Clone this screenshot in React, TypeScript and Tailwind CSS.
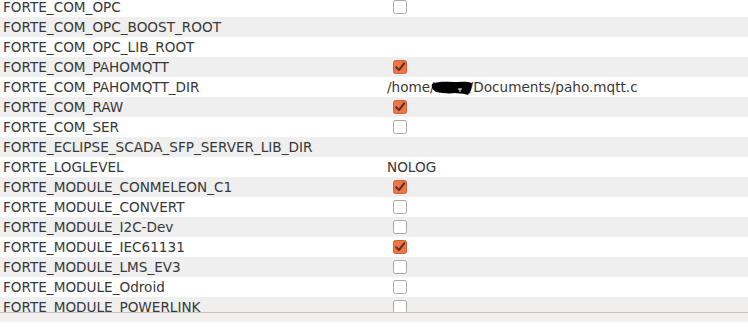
import React from 'react';

type Row = { name: string; value?: string | boolean; path?: boolean };

const ROWS: Row[] = [
  { name: 'FORTE_COM_OPC', value: false },
  { name: 'FORTE_COM_OPC_BOOST_ROOT' },
  { name: 'FORTE_COM_OPC_LIB_ROOT' },
  { name: 'FORTE_COM_PAHOMQTT', value: true },
  { name: 'FORTE_COM_PAHOMQTT_DIR', path: true },
  { name: 'FORTE_COM_RAW', value: true },
  { name: 'FORTE_COM_SER', value: false },
  { name: 'FORTE_ECLIPSE_SCADA_SFP_SERVER_LIB_DIR' },
  { name: 'FORTE_LOGLEVEL', value: 'NOLOG' },
  { name: 'FORTE_MODULE_CONMELEON_C1', value: true },
  { name: 'FORTE_MODULE_CONVERT', value: false },
  { name: 'FORTE_MODULE_I2C-Dev', value: false },
  { name: 'FORTE_MODULE_IEC61131', value: true },
  { name: 'FORTE_MODULE_LMS_EV3', value: false },
  { name: 'FORTE_MODULE_Odroid', value: false },
  { name: 'FORTE_MODULE_POWERLINK', value: false },
];

function CheckBox({ checked }: { checked: boolean }) {
  if (checked) {
    return (
      <svg width="14" height="14" viewBox="0 0 14 14" className="ml-[6px]">
        <rect x="0.5" y="0.5" width="13" height="13" rx="2" fill="#f07446" stroke="#d0602f" />
        <path d="M3.2 7.2 L6 10 L11.2 3.4" fill="none" stroke="#5b3526" strokeWidth="2.1" strokeLinecap="round" strokeLinejoin="round" />
      </svg>
    );
  }
  return (
    <svg width="14" height="14" viewBox="0 0 14 14" className="ml-[6px]">
      <rect x="0.5" y="0.5" width="13" height="13" rx="2" fill="#ffffff" stroke="#a8a6a3" />
    </svg>
  );
}

// black scribble hiding the user name in the path
function Redacted() {
  return (
    <svg width="42" height="16" viewBox="0 0 42 16" className="-mx-[4px] relative top-[1px]">
      <path
        d="M1 4 C8 1 16 2 22 2 C30 2 36 1 41 3 C41 8 39 12 37 15 C32 13 28 14 24 13 C18 14 11 13 5 12 C2 10 0 7 1 4 Z"
        fill="#000000"
      />
      <path d="M27 9 L31 9 M29 9 L29 12" stroke="#ffffff" strokeWidth="1" />
    </svg>
  );
}

function Value({ row }: { row: Row }) {
  if (row.path) {
    return (
      <span className="flex items-center">
        /home/
        <Redacted />
        /Documents/paho.mqtt.c
      </span>
    );
  }
  if (typeof row.value === 'boolean') return <CheckBox checked={row.value} />;
  if (typeof row.value === 'string') return <span>{row.value}</span>;
  return null;
}

export default function App() {
  return (
    <div
      className="w-[748px] h-[328px] bg-white overflow-hidden text-[13.6px] text-[#383838]"
      style={{ fontFamily: '"DejaVu Sans", sans-serif' }}
    >
      <div className="h-[312px] overflow-hidden">
        <div className="-mt-[3px]">
          {ROWS.map((row, i) => (
            <div
              key={row.name}
              className={`flex h-[20px] items-center leading-[20px] ${i % 2 === 1 ? 'bg-[#efefef]' : 'bg-white'}`}
            >
              <div className="w-[387px] pl-[3px] whitespace-nowrap">{row.name}</div>
              <div className="flex-1 flex items-center whitespace-nowrap">
                <Value row={row} />
              </div>
            </div>
          ))}
        </div>
      </div>
      <div className="h-[10px] border-t border-[#c4c3c2] bg-[#f2f1f0]" />
    </div>
  );
}
